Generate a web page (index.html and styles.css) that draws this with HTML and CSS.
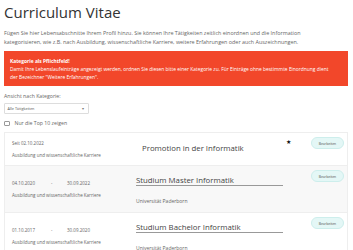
FILE: index.html
```html
<!DOCTYPE html>
<html lang="de">
<head>
    <meta charset="UTF-8">
    <meta name="viewport" content="width=device-width, initial-scale=1.0">
    <title>Curriculum Vitae</title>
    <link rel="stylesheet" href="styles.css">
</head>
<body>
    <div class="page">
        <h1 class="page-title">Curriculum Vitae</h1>
        <p class="intro">Fügen Sie hier Lebensabschnitte Ihrem Profil hinzu. Sie können Ihre Tätigkeiten zeitlich einordnen und die Information<br>kategorisieren, wie z.B. nach Ausbildung, wissenschaftliche Karriere, weitere Erfahrungen oder auch Auszeichnungen.</p>

        <div class="alert">
            <strong>Kategorie als Pflichtfeld!</strong><br>
            Damit Ihre Lebenslaufeinträge angezeigt werden, ordnen Sie diesen bitte einer Kategorie zu. Für Einträge ohne bestimmte Einordnung dient<br>
            der Bezeichner "Weitere Erfahrungen".
        </div>

        <label class="filter-label" for="category">Ansicht nach Kategorie:</label>
        <div class="select">
            <span id="category">Alle Tätigkeiten</span>
            <span class="select-arrow">&#9662;</span>
        </div>

        <label class="top10">
            <span class="checkbox"></span>
            Nur die Top 10 zeigen
        </label>

        <div class="cv-list">
            <div class="entry">
                <div class="entry-left">
                    <div class="dates"><span>Seit 02.10.2022</span></div>
                    <div class="category">Ausbildung und wissenschaftliche Karriere</div>
                </div>
                <div class="entry-main">
                    <div class="entry-title">Promotion in der Informatik</div>
                </div>
                <div class="entry-actions">
                    <span class="star">&#9733;</span>
                    <button class="edit">Bearbeiten</button>
                </div>
            </div>

            <div class="entry alt">
                <div class="entry-left">
                    <div class="dates"><span class="from">04.10.2020</span><span class="dash">-</span><span>30.09.2022</span></div>
                    <div class="category">Ausbildung und wissenschaftliche Karriere</div>
                </div>
                <div class="entry-main">
                    <a class="entry-title link" href="#">Studium Master Informatik</a>
                    <div class="place">Universität Paderborn</div>
                </div>
                <div class="entry-actions">
                    <span class="star"></span>
                    <button class="edit">Bearbeiten</button>
                </div>
            </div>

            <div class="entry">
                <div class="entry-left">
                    <div class="dates"><span class="from">01.10.2017</span><span class="dash">-</span><span>30.09.2020</span></div>
                    <div class="category">Ausbildung und wissenschaftliche Karriere</div>
                </div>
                <div class="entry-main">
                    <a class="entry-title link" href="#">Studium Bachelor Informatik</a>
                    <div class="place">Universität Paderborn</div>
                </div>
                <div class="entry-actions">
                    <span class="star"></span>
                    <button class="edit">Bearbeiten</button>
                </div>
            </div>
        </div>
    </div>
</body>
</html>
```

FILE: styles.css
```css
body {
    font-family: "Open Sans", Arial, sans-serif;
    margin: 0;
    padding: 0;
    background-color: #fff;
    color: #555;
}

.page {
    padding: 3px 5px 0 4px;
}

.page-title {
    margin: 0;
    font-size: 15px;
    line-height: 18px;
    font-weight: 400;
    color: #333;
}

.intro {
    margin: 7.5px 0 0;
    font-size: 5.4px;
    line-height: 9px;
    color: #666;
}

.alert {
    margin-top: 4.5px;
    padding: 5.5px 6px 4.3px;
    background-color: #f2472a;
    color: #fff;
    font-size: 4.9px;
    line-height: 8.4px;
}

.alert strong {
    font-weight: 700;
}

.filter-label {
    display: block;
    margin-top: 5.7px;
    font-size: 5.2px;
    line-height: 8px;
    color: #666;
}

.select {
    margin-top: 3px;
    width: 76px;
    height: 9px;
    border: 1px solid #ddd;
    border-radius: 1px;
    display: flex;
    align-items: center;
    justify-content: space-between;
    padding: 0 4px 0 2.5px;
    box-sizing: content-box;
    font-size: 3.8px;
    color: #555;
}

.select-arrow {
    font-size: 4px;
    color: #777;
}

.top10 {
    display: flex;
    align-items: center;
    gap: 5px;
    margin-top: 6.5px;
    font-size: 5.2px;
    line-height: 7px;
    color: #666;
}

.checkbox {
    width: 3.5px;
    height: 3.5px;
    border: 1px solid #999;
    border-radius: 1px;
}

.cv-list {
    margin-top: 5px;
    border: 1px solid #eee;
    border-bottom: none;
}

.entry {
    display: flex;
    min-height: 32px;
    border-top: 1px solid #eee;
}

.entry:first-child {
    border-top: none;
}

.entry.alt {
    background-color: #f8f8f8;
}

.entry-left {
    width: 130px;
    padding-left: 7px;
    display: flex;
    flex-direction: column;
    justify-content: center;
    gap: 6px;
    font-size: 4.5px;
    line-height: 6px;
    color: #666;
}

.dates {
    display: flex;
}

.dates .from {
    width: 39px;
}

.dates .dash {
    width: 16px;
}

.entry-main {
    flex: 1;
    padding: 10px 0 8px;
}

.entry-title {
    display: block;
    font-size: 7.8px;
    line-height: 10px;
    color: #444;
}

.entry-title.link {
    width: 147px;
    line-height: 8.5px;
    border-bottom: 1px solid #999;
    text-decoration: none;
}

.place {
    margin-top: 12.5px;
    font-size: 5px;
    line-height: 6px;
    color: #666;
}

.entry-actions {
    display: flex;
    align-items: flex-start;
    padding: 4px 3px 0 0;
}

.star {
    width: 10px;
    margin-top: 1px;
    margin-right: 18px;
    font-size: 6px;
    line-height: 8px;
    text-align: center;
    color: #111;
}

.edit {
    width: 33px;
    height: 12px;
    padding: 0;
    border: 1px solid #cdeeec;
    border-radius: 6px;
    background-color: #e4f7f6;
    font-family: "Open Sans", Arial, sans-serif;
    font-size: 3.4px;
    color: #555;
    cursor: pointer;
}
```
